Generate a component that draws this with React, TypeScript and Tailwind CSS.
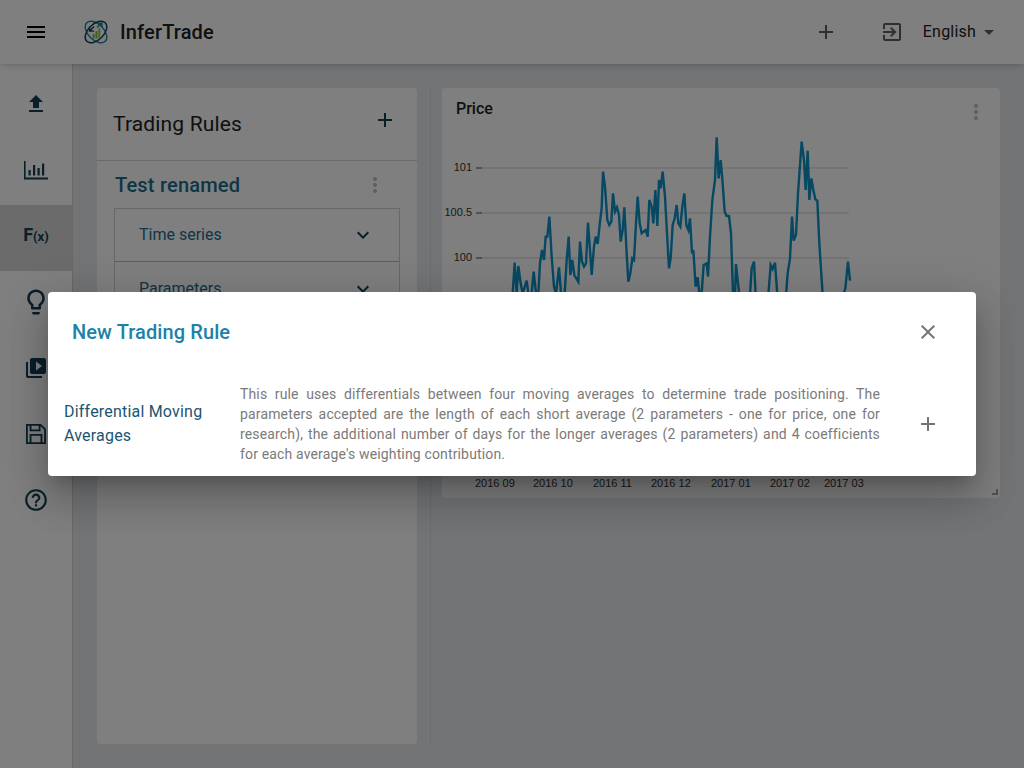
import {
  MdAdd,
  MdClose,
  MdExpandMore,
  MdExitToApp,
  MdFileUpload,
  MdHelpOutline,
  MdMenu,
  MdMoreVert,
  MdOutlineLightbulb,
  MdVideoLibrary,
  MdArrowDropDown,
} from "react-icons/md";

// traced from the chart, in two runs of 3x coordinates
const runA = [
  [230, 640], [248, 610], [254, 518], [260, 610], [265, 528], [272, 580], [278, 610], [290, 572], [295, 610], [305, 610],
  [311, 545], [318, 610], [325, 610], [330, 520], [336, 480], [342, 510], [347, 440], [352, 440], [358, 380], [365, 500],
  [372, 590], [378, 610], [387, 532], [393, 610], [404, 610], [410, 510], [416, 440], [421, 555], [427, 510], [433, 555],
  [445, 575], [450, 455], [456, 515], [462, 530], [468, 520], [474, 398], [480, 480], [485, 555], [492, 470], [497, 440],
  [503, 462], [510, 395], [515, 355], [519, 245], [525, 290], [532, 390], [538, 405], [544, 395], [549, 310], [555, 365],
  [561, 352], [567, 375], [572, 455], [578, 420], [583, 352], [590, 490], [595, 575], [601, 550], [607, 505], [612, 510],
  [618, 400], [623, 320], [629, 400], [635, 430], [641, 425], [647, 420], [653, 440], [658, 330], [665, 350], [670, 400],
  [676, 300], [682, 408], [687, 270], [692, 295], [698, 245], [705, 320], [711, 430], [717, 535], [722, 505], [728, 405],
  [734, 385], [740, 345], [745, 400], [751, 410], [757, 350], [763, 310], [769, 405], [775, 420], [780, 385], [786, 490],
  [790, 480], [797, 590], [803, 562], [808, 610], [815, 610], [821, 525], [830, 520], [834, 560], [840, 440], [847, 330],
  [855, 270],
];
const runB = [
  [50, 52], [56, 175], [62, 120], [68, 190], [74, 275], [80, 288], [87, 288], [93, 340], [99, 520], [105, 530], [108, 432],
  [113, 480], [118, 525], [150, 525], [155, 445], [162, 425], [167, 525], [205, 525], [212, 435], [218, 447], [225, 428],
  [232, 525], [258, 525], [263, 460], [270, 415], [276, 290], [281, 362], [288, 345], [294, 220], [305, 65], [312, 120],
  [317, 210], [323, 92], [328, 240], [334, 175], [340, 210], [346, 238], [352, 242], [358, 370], [368, 525], [430, 525],
  [436, 505], [444, 425], [450, 482],
];
const pricePoints = [
  ...runA.map(([x, y]) => `${430 + x / 3},${90 + y / 3}`),
  ...runB.map(([x, y]) => `${700 + x / 3},${120 + y / 3}`),
].join(" ");

const xLabels = [
  ["2016 09", 475],
  ["2016 10", 533],
  ["2016 11", 593],
  ["2016 12", 651],
  ["2017 01", 711],
  ["2017 02", 770],
  ["2017 03", 824],
] as const;

function Logo() {
  return (
    <svg width="26" height="26" viewBox="0 0 28 28" fill="none">
      <ellipse cx="14" cy="14" rx="14" ry="8.5" transform="rotate(45 14 14)" stroke="#1f86ad" strokeWidth="1.6" />
      <ellipse cx="14" cy="14" rx="14" ry="8.5" transform="rotate(-45 14 14)" stroke="#123f55" strokeWidth="1.6" />
      <rect x="10.5" y="16" width="2" height="5" fill="#7cb342" />
      <rect x="13.5" y="13" width="2" height="8" fill="#7cb342" />
      <rect x="16.5" y="10" width="2" height="11" fill="#8bc34a" />
      <path d="M7 13 L12 8 M7 8 V13 H12" stroke="#123f55" strokeWidth="1.5" />
      <path d="M15 9 L20 5 M16 4.5 H20.5 V9" stroke="#1f86ad" strokeWidth="1.5" />
    </svg>
  );
}

function ChartIcon() {
  return (
    <svg width="24" height="19" viewBox="0 0 24 19" fill="currentColor">
      <path d="M0 0h1.6v16.6H24V18.4H0z" />
      <rect x="4.5" y="9" width="2.2" height="5.5" />
      <rect x="9" y="4" width="2.2" height="10.5" />
      <rect x="13.5" y="7" width="2.2" height="7.5" />
      <rect x="18" y="2.5" width="2.2" height="12" />
    </svg>
  );
}

function SaveIcon() {
  return (
    <svg width="20" height="20" viewBox="0 0 22 22" fill="none" stroke="currentColor" strokeWidth="2">
      <path d="M1 1h15l5 5v15H1z" />
      <path d="M5 21v-9h12v9" />
      <path d="M5 1v6h10V1" />
    </svg>
  );
}

function NavItem({ children, active }: { children: React.ReactNode; active?: boolean }) {
  return (
    <div className={active ? "flex h-[66px] items-center justify-center bg-[#d6d6d6] pb-1 text-[#123f55]" : "flex h-[66px] items-center justify-center pb-1 text-[#123f55]"}>
      {children}
    </div>
  );
}

function AccordionRow({ label, last }: { label: string; last?: boolean }) {
  return (
    <div className={last ? "flex h-[55px] items-center justify-between border-b border-[#bdbdbd] pl-6 pr-6 text-[#1c6d8f]" : "flex h-[53px] items-center justify-between border-b border-[#bdbdbd] pl-6 pr-6 text-[#1c6d8f]"}>
      <span className="text-base">{label}</span>
      <MdExpandMore size={24} className="text-[#123f55]" />
    </div>
  );
}

export default function App() {
  return (
    <div className="relative h-[768px] w-[1024px] overflow-hidden bg-[#e4e8ec] font-['Roboto',sans-serif]">
      {/* Header */}
      <header className="relative z-10 flex h-16 items-center bg-white pl-6 pr-[23px] shadow-md">
        <MdMenu size={24} className="text-black" />
        <div className="ml-[35px] flex items-center gap-[11px]">
          <Logo />
          <span className="text-xl font-medium tracking-[0.15px] text-[#212121]">InferTrade</span>
        </div>
        <div className="ml-auto flex items-center text-[#616161]">
          <MdAdd size={24} />
          <MdExitToApp size={24} className="ml-[42px]" />
          <span className="ml-[19px] text-base tracking-[0.2px] text-[#212121]">English</span>
          <MdArrowDropDown size={24} className="ml-[1px]" />
        </div>
      </header>

      <div className="flex h-[704px]">
        {/* Sidebar */}
        <nav className="w-[73px] shrink-0 border-r border-[#d0d0d0] bg-white pt-[9px]">
          <NavItem><MdFileUpload size={24} /></NavItem>
          <NavItem><ChartIcon /></NavItem>
          <NavItem active>
            <span className="mb-[2px] font-bold leading-none">
              <span className="text-[18px]">F</span>
              <span className="text-[13px]">(x)</span>
            </span>
          </NavItem>
          <NavItem><MdOutlineLightbulb size={30} /></NavItem>
          <NavItem><MdVideoLibrary size={24} /></NavItem>
          <NavItem><SaveIcon /></NavItem>
          <NavItem><MdHelpOutline size={26} /></NavItem>
        </nav>

        <main className="flex flex-1 items-start pl-6 pt-6">
          {/* Trading rules panel */}
          <section className="h-[656px] w-[320px] shrink-0 rounded-sm bg-white">
            <div className="flex h-[73px] items-center justify-between border-b border-[#d4d4d4] pl-4 pr-5">
              <h2 className="pt-[1px] text-[21px] tracking-[0.15px] text-[#212121]">Trading Rules</h2>
              <MdAdd size={24} className="mb-2 text-[#123f55]" />
            </div>
            <div className="flex h-[47px] items-center justify-between pl-[18px] pr-[30px]">
              <h3 className="text-xl font-medium tracking-[0.2px] text-[#1c6d8f]">Test renamed</h3>
              <MdMoreVert size={24} className="text-[#bdbdbd]" />
            </div>
            <div className="mx-[17px] border border-b-0 border-[#d0d0d0]">
              <AccordionRow label="Time series" />
              <AccordionRow label="Parameters" last />
            </div>
          </section>

          {/* Splitter */}
          <div className="ml-[13px] h-[656px] w-px shrink-0 bg-[#d5d9dd]" />

          {/* Price chart */}
          <section className="relative ml-[11px] h-[410px] w-[558px] shrink-0 rounded-sm bg-white">
            <div className="flex h-10 items-center justify-between pl-[14px] pr-3">
              <span className="mt-[2px] font-medium text-[#212121]">Price</span>
              <MdMoreVert size={24} className="mt-2 text-[#bdbdbd]" />
            </div>
            <svg className="block" width="558" height="370" viewBox="442 128 558 370">
              {[168, 213, 258].map((y) => (
                <g key={y}>
                  <line x1="476" x2="849" y1={y} y2={y} stroke="#e0e0e0" strokeWidth="1.5" />
                  <line x1="476" x2="482" y1={y} y2={y} stroke="#757575" strokeWidth="1.2" />
                </g>
              ))}
              <g fontFamily="Liberation Sans, sans-serif" fontSize="11" fill="#333">
                <text x="472" y="171" textAnchor="end">101</text>
                <text x="472" y="216" textAnchor="end">100.5</text>
                <text x="472" y="261" textAnchor="end">100</text>
                {xLabels.map(([label, x]) => (
                  <text key={label} x={x} y="487">{label}</text>
                ))}
              </g>
              <polyline points={pricePoints} fill="none" stroke="#0e90c6" strokeWidth="2.4" strokeLinejoin="miter" />
              <path d="M997 489v5h-5" fill="none" stroke="#888" strokeWidth="1.5" />
            </svg>
          </section>
        </main>
      </div>

      {/* Dialog */}
      <div className="absolute inset-0 z-20 flex items-center justify-center bg-black/50">
        <div className="h-[184px] w-[928px] rounded bg-white shadow-[0_11px_15px_-7px_rgba(0,0,0,0.2),0_24px_38px_3px_rgba(0,0,0,0.14),0_9px_46px_8px_rgba(0,0,0,0.12)]">
          <div className="flex h-[92px] items-center justify-between pb-3 pl-6 pr-9">
            <h2 className="text-xl font-medium tracking-[0.1px] text-[#2081a8]">New Trading Rule</h2>
            <MdClose size={24} className="text-[#757575]" />
          </div>
          <div className="flex items-center pl-4 pr-9">
            <div className="w-[176px] shrink-0 text-base leading-6 tracking-[0.2px] text-[#1d5470]">
              Differential Moving Averages
            </div>
            <p className="w-[640px] shrink-0 text-justify text-sm leading-5 tracking-[0.15px] text-[#7a7a7a]">
              This rule uses differentials between four moving averages to determine trade positioning. The parameters accepted are the length of each short average (2 parameters - one for price, one for research), the additional number of days for the longer averages (2 parameters) and 4 coefficients for each average's weighting contribution.
            </p>
            <MdAdd size={24} className="ml-auto text-[#757575]" />
          </div>
        </div>
      </div>
    </div>
  );
}
